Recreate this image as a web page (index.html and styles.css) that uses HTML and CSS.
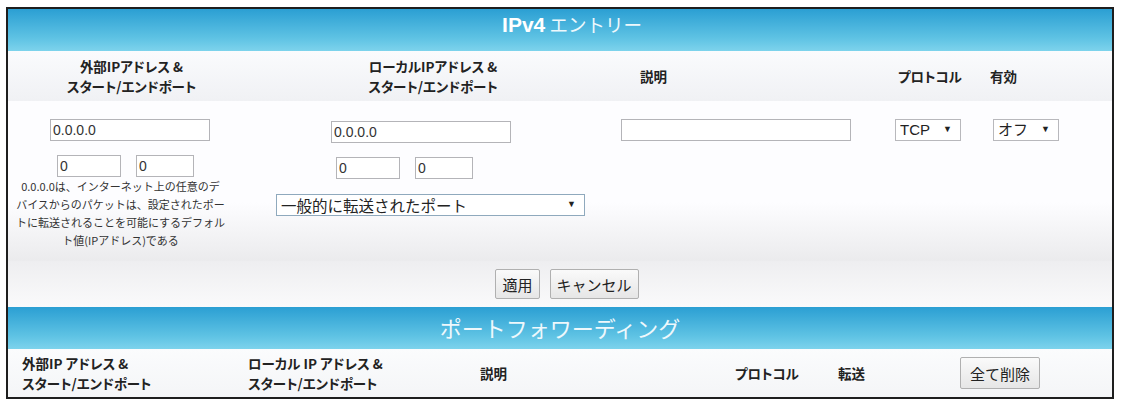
FILE: index.html
```html
<!DOCTYPE html>
<html lang="ja">
<head>
    <meta charset="UTF-8">
    <title>IPv4 エントリー</title>
    <link rel="stylesheet" href="styles.css">
</head>
<body>
    <div class="frame">
        <div class="bar title"><b>IPv4</b> エントリー</div>

        <div class="entry">
            <div class="head c1">外部IPアドレス &amp;<br>スタート/エンドポート</div>
            <div class="head c2">ローカルIPアドレス &amp;<br>スタート/エンドポート</div>
            <div class="head c3">説明</div>
            <div class="head c4">プロトコル</div>
            <div class="head c5">有効</div>

            <div class="cell c1">
                <input class="ip ext-ip" type="text" value="0.0.0.0">
                <div class="ports ext-ports">
                    <input class="port" type="text" value="0">
                    <input class="port narrow" type="text" value="0">
                </div>
                <p class="note">0.0.0.0は、インターネット上の任意のデ<br>バイスからのパケットは、設定されたポー<br>トに転送されることを可能にするデフォル<br>ト値(IPアドレス)である</p>
            </div>
            <div class="cell c2">
                <input class="ip local-ip" type="text" value="0.0.0.0">
                <div class="ports local-ports">
                    <input class="port" type="text" value="0">
                    <input class="port narrow" type="text" value="0">
                </div>
                <div class="pick wide">
                    <select><option>一般的に転送されたポート</option></select>
                </div>
            </div>
            <div class="cell c3">
                <input class="desc" type="text" value="">
            </div>
            <div class="cell c4">
                <div class="pick small">
                    <select><option>TCP</option><option>UDP</option></select>
                </div>
            </div>
            <div class="cell c5">
                <div class="pick small">
                    <select><option>オフ</option><option>オン</option></select>
                </div>
            </div>
        </div>

        <div class="actions">
            <button>適用</button>
            <button>キャンセル</button>
        </div>

        <div class="bar light">ポートフォワーディング</div>

        <div class="list-head">
            <div class="lh1">外部IP アドレス &amp;<br>スタート/エンドポート</div>
            <div class="lh2">ローカル IP アドレス &amp;<br>スタート/エンドポート</div>
            <div class="lh3">説明</div>
            <div class="lh4">プロトコル</div>
            <div class="lh5">転送</div>
            <div class="lh6"><button class="clear">全て削除</button></div>
        </div>
    </div>
</body>
</html>
```

FILE: styles.css
```css
body {
    margin: 7px 0 0 6px;
    background-color: #fff;
    font-family: 'Liberation Sans', 'Noto Sans CJK JP', sans-serif;
    color: #222;
}
.frame {
    width: 1104px;
    border: 2px solid #1e1e1e;
    background-color: #fdfdfe;
}
.bar {
    height: 42px;
    line-height: 40px;
    text-align: center;
    color: #eef8fc;
    font-family: 'Noto Sans CJK JP', sans-serif;
    font-size: 22px;
    background: linear-gradient(#2b9fd3, #5fc3e4 70%, #7dd3ec);
}
.bar.title {
    line-height: 30px;
    font-size: 18.5px;
    padding-left: 24px;
}
.bar b {
    font-family: 'Liberation Sans', sans-serif;
    font-size: 21px;
    color: #fff;
}

/* entry form */
.entry {
    display: grid;
    grid-template-columns: 247px 360px 270px 100px 1fr;
    background: linear-gradient(#fdfdff 0, #fdfdff 72%, #ebebed 100%);
}
.head {
    height: 50px;
    display: flex;
    flex-direction: column;
    justify-content: center;
    font-family: 'Noto Sans CJK JP', sans-serif;
    font-feature-settings: "palt";
    font-weight: bold;
    font-size: 13.5px;
    line-height: 20px;
    background: linear-gradient(#fafbfd, #f0f1f4);
}
.head.c1, .head.c2 {
    text-align: center;
}
.head.c2 {
    padding-right: 4px;
}
.head.c3 {
    padding-left: 25px;
}
.head.c4 {
    padding-left: 13px;
}
.head.c5 {
    padding-left: 5px;
}
.cell {
    padding-top: 18px;
    padding-bottom: 12px;
}
.cell.c2 {
    padding-top: 20px;
}
.cell.c3 {
    padding-left: 6px;
}
.cell.c4 {
    padding-left: 10px;
}
.cell.c5 {
    padding-left: 8px;
}
input {
    display: block;
    box-sizing: border-box;
    height: 22px;
    border: 1px solid #b4b4b8;
    background-color: #fff;
    font-family: 'Liberation Sans', sans-serif;
    font-size: 14px;
    color: #333;
    padding: 0 2px;
    margin: 0;
}
.ip {
    width: 160px;
}
.ext-ip {
    margin-left: 42px;
}
.local-ip {
    width: 180px;
    margin-left: 76px;
}
.ports {
    display: flex;
    gap: 15px;
    margin-top: 14px;
}
.ext-ports {
    margin-left: 49px;
}
.local-ports {
    margin-left: 81px;
}
.port {
    width: 64px;
}
.port.narrow {
    width: 58px;
}
.desc {
    width: 230px;
}
.note {
    margin: 0;
    padding-right: 22px;
    text-align: center;
    font-family: 'Noto Sans CJK JP', sans-serif;
    font-size: 11px;
    line-height: 18px;
    color: #333;
}
.pick {
    position: relative;
    height: 22px;
}
.pick select {
    appearance: none;
    -webkit-appearance: none;
    box-sizing: border-box;
    width: 100%;
    height: 22px;
    border: 1px solid #b8b8bc;
    background-color: #fff;
    font-family: 'Noto Sans CJK JP', sans-serif;
    font-size: 14px;
    color: #222;
    padding: 0 4px;
    margin: 0;
    line-height: 20px;
}
.pick::after {
    content: "▼";
    position: absolute;
    right: 9px;
    top: 5px;
    font-size: 9px;
    color: #222;
    pointer-events: none;
}
.pick.wide {
    width: 309px;
    margin-left: 21px;
    margin-top: 15px;
}
.pick.wide select {
    border-color: #8fa9bd;
    font-size: 15.5px;
}
.pick.small {
    width: 66px;
}
.pick.small select {
    font-family: 'Liberation Sans', 'Noto Sans CJK JP', sans-serif;
    font-size: 15px;
}

/* buttons */
.actions {
    height: 46px;
    display: flex;
    justify-content: center;
    align-items: center;
    gap: 10px;
    padding-left: 14px;
    background: linear-gradient(#eeeef0, #fafafb);
}
button {
    height: 30px;
    padding: 0 6px;
    border: 1px solid #b0b0b0;
    border-radius: 2px;
    background: linear-gradient(#fafafa, #e6e6e6);
    font-family: 'Noto Sans CJK JP', sans-serif;
    font-size: 15px;
    color: #222;
}

/* forwarding list */
.list-head {
    height: 48px;
    display: flex;
    align-items: center;
    font-family: 'Noto Sans CJK JP', sans-serif;
    font-feature-settings: "palt";
    font-weight: bold;
    font-size: 13.5px;
    line-height: 20px;
    background: linear-gradient(#fbfcfd, #f4f5f7);
}
.lh1 {
    width: 226px;
    padding-left: 14px;
}
.lh2 {
    width: 232px;
}
.lh3 {
    width: 255px;
}
.lh4 {
    width: 103px;
}
.lh5 {
    width: 122px;
}
.clear {
    height: 32px;
    width: 80px;
    padding: 0;
    font-weight: normal;
    font-size: 15px;
}
```
